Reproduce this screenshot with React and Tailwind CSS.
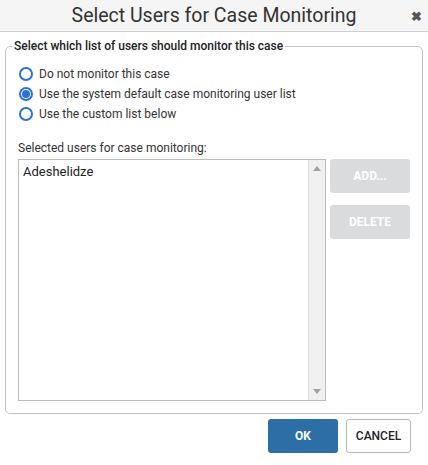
import React from "react";

function Radio({ checked, label }) {
  return (
    <label className="flex items-center h-[20px] gap-[6px]">
      <span className="relative w-[14px] h-[14px] rounded-full border-2 border-[#2a73d0] bg-white flex items-center justify-center">
        {checked && <span className="w-[8px] h-[8px] rounded-full bg-[#2a73d0]" />}
      </span>
      <span className="text-[12px] text-[#333]">{label}</span>
    </label>
  );
}

export default function App() {
  return (
    <div className="w-[428px] h-[465px] bg-white relative" style={{ fontFamily: "Roboto, 'Liberation Sans', sans-serif" }}>
      <div className="h-[32px] bg-[#f5f5f5] border-b border-[#d0d0d0] flex items-center justify-center relative">
        <span className="text-[19.5px] text-[#333]">Select Users for Case Monitoring</span>
        <span className="absolute right-[6px] top-[7px] text-[13px] font-bold text-[#555]">✖</span>
      </div>
      <fieldset className="mx-[5px] mt-[7px] h-[375px] border border-[#c4c4c4] rounded-[5px] pl-[12px] pr-[11px]">
        <legend className="-ml-[6px] px-[2px] text-[12px] font-medium text-[#222] leading-[14px]">
          Select which list of users should monitor this case
        </legend>
        <div className="mt-[11px] pl-[1px] flex flex-col">
          <Radio label="Do not monitor this case" />
          <Radio checked label="Use the system default case monitoring user list" />
          <Radio label="Use the custom list below" />
        </div>
        <div className="mt-[17px] text-[12px] text-[#333] leading-[14px]">Selected users for case monitoring:</div>
        <div className="mt-[4px] flex gap-[4px]">
          <div className="w-[308px] h-[242px] border border-[#bdbdbd] flex">
            <div className="flex-1 px-[4px] pt-[2px] text-[13px] text-[#222]">Adeshelidze</div>
            <div className="w-[17px] bg-[#f0f0f0] border-l border-[#dcdcdc] flex flex-col justify-between items-center py-[6px]">
              <svg width="8" height="5" viewBox="0 0 8 5"><path d="M0 5 L4 0 L8 5 Z" fill="#a3a3a3" /></svg>
              <svg width="8" height="5" viewBox="0 0 8 5"><path d="M0 0 L4 5 L8 0 Z" fill="#a3a3a3" /></svg>
            </div>
          </div>
          <div className="flex flex-col gap-[12px]">
            <button className="w-[80px] h-[34px] rounded-[3px] bg-[#d9dbdd] text-white text-[12px] font-bold">ADD...</button>
            <button className="w-[80px] h-[34px] rounded-[3px] bg-[#d9dbdd] text-white text-[12px] font-bold">DELETE</button>
          </div>
        </div>
      </fieldset>
      <div className="flex justify-end gap-[8px] pr-[17px] mt-[5px]">
        <button className="w-[70px] h-[34px] rounded-[3px] bg-[#2e6ea6] text-white text-[12px] font-bold">OK</button>
        <button className="w-[65px] h-[34px] rounded-[3px] bg-white border border-[#b8b8b8] text-[#222] text-[12px] font-medium">CANCEL</button>
      </div>
    </div>
  );
}
